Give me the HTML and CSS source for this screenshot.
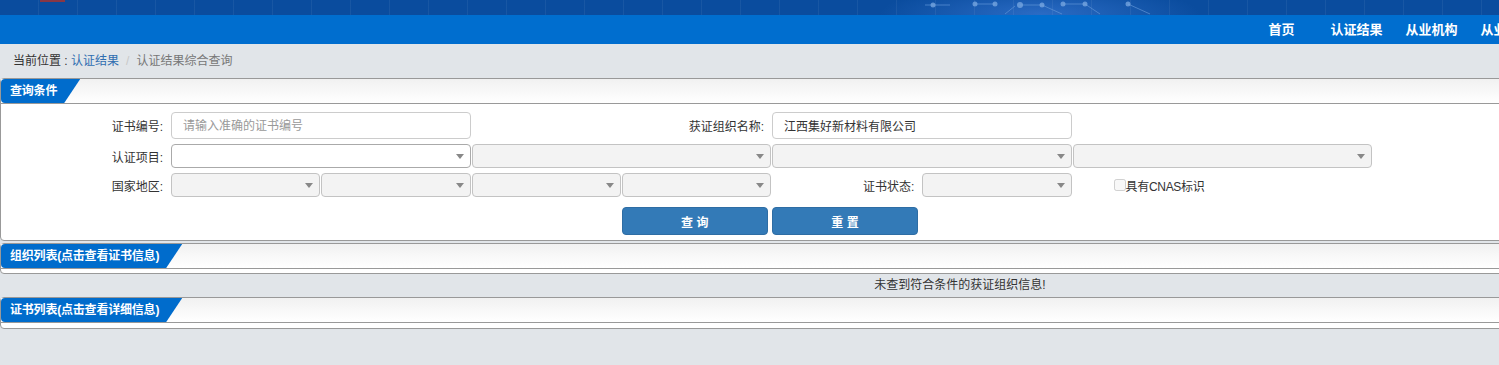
FILE: index.html
```html
<!DOCTYPE html>
<html lang="zh-CN">
<head>
    <meta charset="UTF-8">
    <meta name="viewport" content="width=device-width, initial-scale=1.0">
    <title>认证结果综合查询</title>
    <link rel="stylesheet" href="styles.css">
</head>
<body>
    <div class="page">
        <div class="banner">
            <svg class="banner-art" width="1920" height="15" viewBox="0 0 1920 15">
                <rect x="40" y="0" width="25" height="2" fill="#a8322f" opacity="0.8"/>
                <g stroke="#5f95d8" stroke-width="1" fill="none" opacity="0.7">
                    <path d="M925 5 L950 5"/>
                    <path d="M975 4 L995 4"/>
                    <path d="M1020 5 L1042 5 L1062 14"/>
                    <path d="M1063 4 L1085 4 L1100 14"/>
                    <path d="M1128 4 L1150 14"/>
                    <path d="M1005 14 L1015 6"/>
                </g>
                <g fill="#7aa9e2" opacity="0.75">
                    <circle cx="933" cy="5" r="2.5"/>
                    <circle cx="975" cy="4" r="2.5"/>
                    <circle cx="995" cy="4" r="2.5"/>
                    <circle cx="1020" cy="5" r="3"/>
                    <circle cx="1042" cy="5" r="2.5"/>
                    <circle cx="1063" cy="4" r="2.5"/>
                    <circle cx="1085" cy="4" r="2.5"/>
                    <circle cx="1128" cy="4" r="2.5"/>
                </g>
            </svg>
        </div>

        <div class="nav">
            <ul>
                <li>首页</li>
                <li>认证结果</li>
                <li>从业机构</li>
                <li>从业人员</li>
                <li>政策法规</li>
            </ul>
        </div>

        <div class="crumb">
            当前位置 : <a href="#">认证结果</a><span class="sep">/</span><span class="here">认证结果综合查询</span>
        </div>

        <div class="panel">
            <div class="panel-head"><span class="tab">查询条件</span></div>
            <div class="panel-body">
                <div class="row">
                    <label class="lbl">证书编号:</label>
                    <input class="txt span2" type="text" placeholder="请输入准确的证书编号">
                    <label class="lbl span2">获证组织名称:</label>
                    <input class="txt span2" type="text" value="江西集好新材料有限公司">
                </div>
                <div class="row">
                    <label class="lbl">认证项目:</label>
                    <span class="sel span2 on"><select></select></span>
                    <span class="sel span2"><select disabled></select></span>
                    <span class="sel span2"><select disabled></select></span>
                    <span class="sel span2"><select disabled></select></span>
                </div>
                <div class="row">
                    <label class="lbl">国家地区:</label>
                    <span class="sel"><select disabled></select></span>
                    <span class="sel"><select disabled></select></span>
                    <span class="sel"><select disabled></select></span>
                    <span class="sel"><select disabled></select></span>
                    <label class="lbl">证书状态:</label>
                    <span class="sel"><select disabled></select></span>
                    <label class="check"><input type="checkbox" disabled>具有CNAS标识</label>
                </div>
                <div class="row">
                    <button class="btn col5">查 询</button>
                    <button class="btn">重 置</button>
                </div>
            </div>
        </div>

        <div class="panel gap">
            <div class="panel-head"><span class="tab">组织列表(点击查看证书信息)</span></div>
            <div class="panel-body empty"></div>
        </div>

        <div class="message">未查到符合条件的获证组织信息!</div>

        <div class="panel">
            <div class="panel-head"><span class="tab">证书列表(点击查看详细信息)</span></div>
            <div class="panel-body empty last"></div>
        </div>
    </div>
</body>
</html>
```

FILE: styles.css
```css
html, body {
    margin: 0;
    overflow: hidden;
}
body {
    background: #e1e5e9;
    font-family: 'Liberation Sans', 'Noto Sans CJK SC', sans-serif;
    font-size: 12px;
    color: #333;
}
.page {
    width: 1920px;
}

/* top banner */
.banner {
    height: 15px;
    background:
        repeating-linear-gradient(to right, transparent 0, transparent 38px, rgba(255, 255, 255, 0.06) 38px, rgba(255, 255, 255, 0.06) 39px),
        radial-gradient(ellipse 160px 30px at 1040px 14px, #2a6bc4, transparent),
        #0a4c9e;
    overflow: hidden;
}
.banner-art {
    display: block;
}

/* nav */
.nav {
    height: 29px;
    background: #006ecf;
}
.nav ul {
    display: flex;
    margin: 0;
    padding: 0 0 0 1244px;
    list-style: none;
}
.nav li {
    width: 75px;
    text-align: center;
    line-height: 29px;
    color: #fff;
    font-weight: bold;
    font-size: 13px;
}

/* breadcrumb */
.crumb {
    height: 34px;
    line-height: 34px;
    padding-left: 13px;
    color: #333;
}
.crumb a {
    color: #2f6db0;
    text-decoration: none;
}
.crumb .sep {
    color: #c8c8c8;
    padding: 0 7px;
}
.crumb .here {
    color: #777;
}

/* panels */
.panel {
    background: #fff;
    border: 1px solid #999;
    border-radius: 4px 0 0 4px;
}
.panel.gap {
    margin-top: 2px;
}
.panel-head {
    height: 24px;
    background: linear-gradient(#f1f1f1, #fff);
    border-bottom: 1px solid #999;
}
.tab {
    display: inline-block;
    height: 24px;
    line-height: 24px;
    padding: 0 23px 0 9px;
    background: #006ccc;
    color: #fff;
    font-weight: bold;
    letter-spacing: -0.2px;
    border-top-left-radius: 4px;
    border-bottom-left-radius: 4px;
    clip-path: polygon(0 0, 100% 0, calc(100% - 16px) 100%, 0 100%);
}
.panel-body {
    padding: 8px 0 5px;
}
.panel-body.empty {
    padding: 0;
    height: 4px;
}
.panel-body.last {
    height: 5px;
}

/* form rows */
.row {
    display: grid;
    grid-template-columns: 170px repeat(8, 150.25px);
    align-items: center;
}
.row + .row {
    margin-top: 5px;
}
.row:last-child {
    margin-top: 10px;
}
.span2 {
    grid-column: span 2;
}
.col5 {
    grid-column: 5;
}
.lbl {
    text-align: right;
    padding-right: 8px;
    color: #333;
}
.txt {
    height: 27px;
    width: calc(100% - 1px);
    box-sizing: border-box;
    border: 1px solid #ccc;
    border-radius: 4px;
    padding: 0 11px;
    font-family: inherit;
    font-size: 12px;
    color: #333;
    outline: none;
}
.txt::placeholder {
    color: #999;
}
.sel {
    position: relative;
    display: block;
    height: 24px;
    width: calc(100% - 1px);
}
.sel select {
    width: 100%;
    height: 100%;
    box-sizing: border-box;
    -webkit-appearance: none;
    appearance: none;
    border: 1px solid #aaa;
    border-radius: 4px;
    background: #eee;
    margin: 0;
}
.sel.on select {
    background: #fff;
}
.sel::after {
    content: "";
    position: absolute;
    right: 7px;
    top: 10px;
    border-left: 4px solid transparent;
    border-right: 4px solid transparent;
    border-top: 5px solid #888;
}
.check {
    display: flex;
    align-items: center;
    padding-left: 41px;
    color: #333;
    white-space: nowrap;
    letter-spacing: -0.3px;
}
.check input {
    width: 12px;
    height: 12px;
    margin: 0;
}
.btn {
    height: 28px;
    width: 146px;
    background: #337ab7;
    border: 1px solid #2e6da4;
    border-radius: 4px;
    color: #fff;
    font-family: inherit;
    font-size: 12px;
    font-weight: bold;
    cursor: pointer;
}

.message {
    height: 23px;
    line-height: 23px;
    text-align: center;
    color: #333;
}
```
